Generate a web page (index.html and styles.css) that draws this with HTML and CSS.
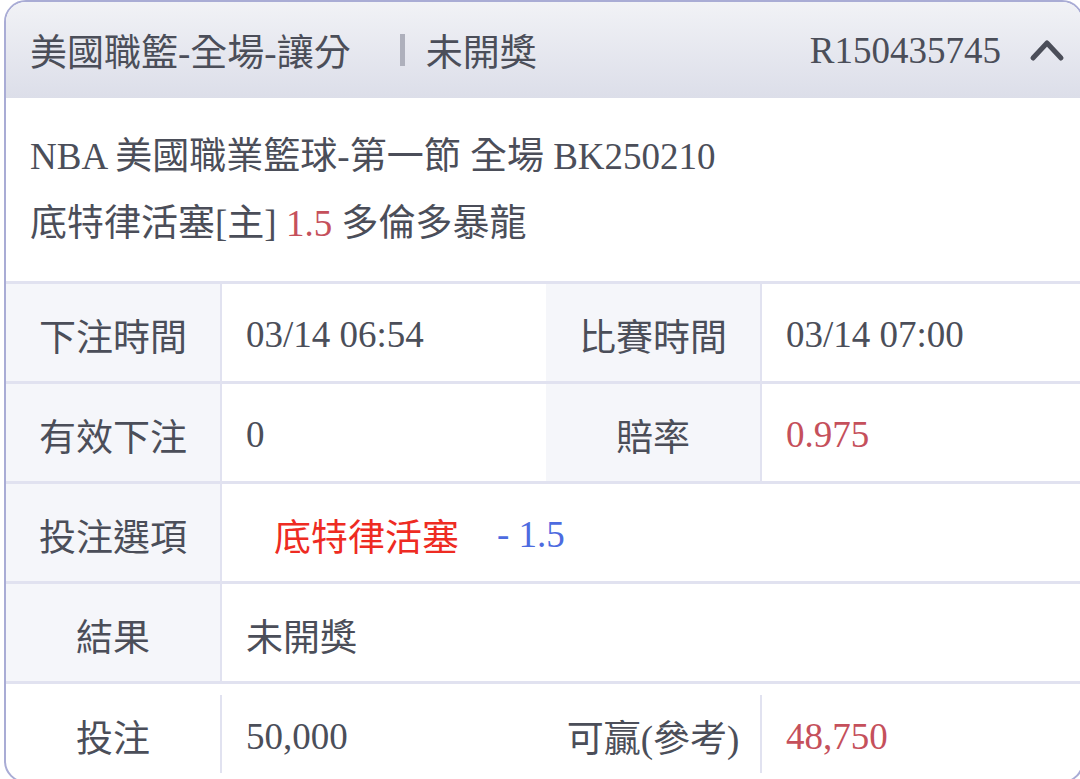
FILE: index.html
```html
<!DOCTYPE html>
<html lang="zh-Hant">
<head>
    <meta charset="UTF-8">
    <title>注單明細</title>
    <link rel="stylesheet" href="styles.css">
</head>
<body>
    <div class="card">
        <div class="card-head">
            <span class="head-title">美國職籃-全場-讓分</span>
            <span class="head-sep"></span>
            <span class="head-status">未開獎</span>
            <span class="head-no">R150435745</span>
            <svg class="chevron" width="36" height="24" viewBox="0 0 36 24">
                <path d="M4 20 L18 5 L32 20" fill="none" stroke="#4b4e59" stroke-width="5" stroke-linecap="round" stroke-linejoin="round"/>
            </svg>
        </div>
        <!-- match info -->
        <div class="match">
            <div>NBA 美國職業籃球-第一節 全場 BK250210</div>
            <div>底特律活塞[主] <span class="odds">1.5</span> 多倫多暴龍</div>
        </div>
        <div class="row">
            <div class="label">下注時間</div>
            <div class="value">03/14 06:54</div>
            <div class="label">比賽時間</div>
            <div class="value">03/14 07:00</div>
        </div>
        <div class="row">
            <div class="label">有效下注</div>
            <div class="value">0</div>
            <div class="label">賠率</div>
            <div class="value odds">0.975</div>
        </div>
        <div class="row">
            <div class="label">投注選項</div>
            <div class="value wide">
                <span class="pick-team">底特律活塞</span>
                <span class="pick-line">- 1.5</span>
            </div>
        </div>
        <div class="row">
            <div class="label">結果</div>
            <div class="value wide">未開獎</div>
        </div>
        <div class="row plain">
            <div class="label">投注</div>
            <div class="value">50,000</div>
            <div class="label">可贏(參考)</div>
            <div class="value odds">48,750</div>
        </div>
    </div>
</body>
</html>
```

FILE: styles.css
```css
body {
    margin: 0;
    overflow: hidden;
    background: #fff;
    font-family: "Liberation Serif", "Noto Sans CJK TC", serif;
    color: #4b4e59;
}
.card {
    margin-left: 4px;
    width: 1080px;
    height: 783px;
    box-sizing: border-box;
    border: 2px solid #a9acd5;
    border-radius: 22px;
    overflow: hidden;
    background: #fff;
}
.card-head {
    display: flex;
    align-items: center;
    height: 96px;
    padding: 0 17px 0 24px;
    background: linear-gradient(180deg, #f1f2f6 0%, #dcdee9 100%);
}
.head-title,
.head-status {
    font-size: 37px;
}
.head-sep {
    width: 5px;
    height: 32px;
    margin: 0 21px 0 49px;
    background: #aeb0bc;
}
.head-no {
    margin-left: auto;
    font-size: 37px;
}
.chevron {
    margin-left: 28px;
}
.match {
    height: 183px;
    box-sizing: border-box;
    padding: 25px 24px 0 24px;
    font-size: 37px;
    line-height: 67px;
}
.odds {
    color: #c5505b;
}
.row {
    display: grid;
    grid-template-columns: 214px 326px 214px 1fr;
    height: 100px;
    box-sizing: border-box;
    border-top: 3px solid #e1e2f0;
    font-size: 37px;
}
.label {
    display: flex;
    align-items: center;
    justify-content: center;
    padding-top: 4px;
    background: #f5f6fa;
}
.value {
    display: flex;
    align-items: center;
    padding-top: 4px;
    padding-left: 24px;
    border-left: 2px solid #e1e2f0;
}
.value.wide {
    grid-column: 2 / 5;
}
.pick-team {
    margin-left: 28px;
    color: #ee2b22;
}
.pick-line {
    margin-left: 38px;
    color: #4d6be0;
}
.row.plain {
    padding: 11px 0 8px 0;
}
.row.plain .label {
    background: none;
}
```
